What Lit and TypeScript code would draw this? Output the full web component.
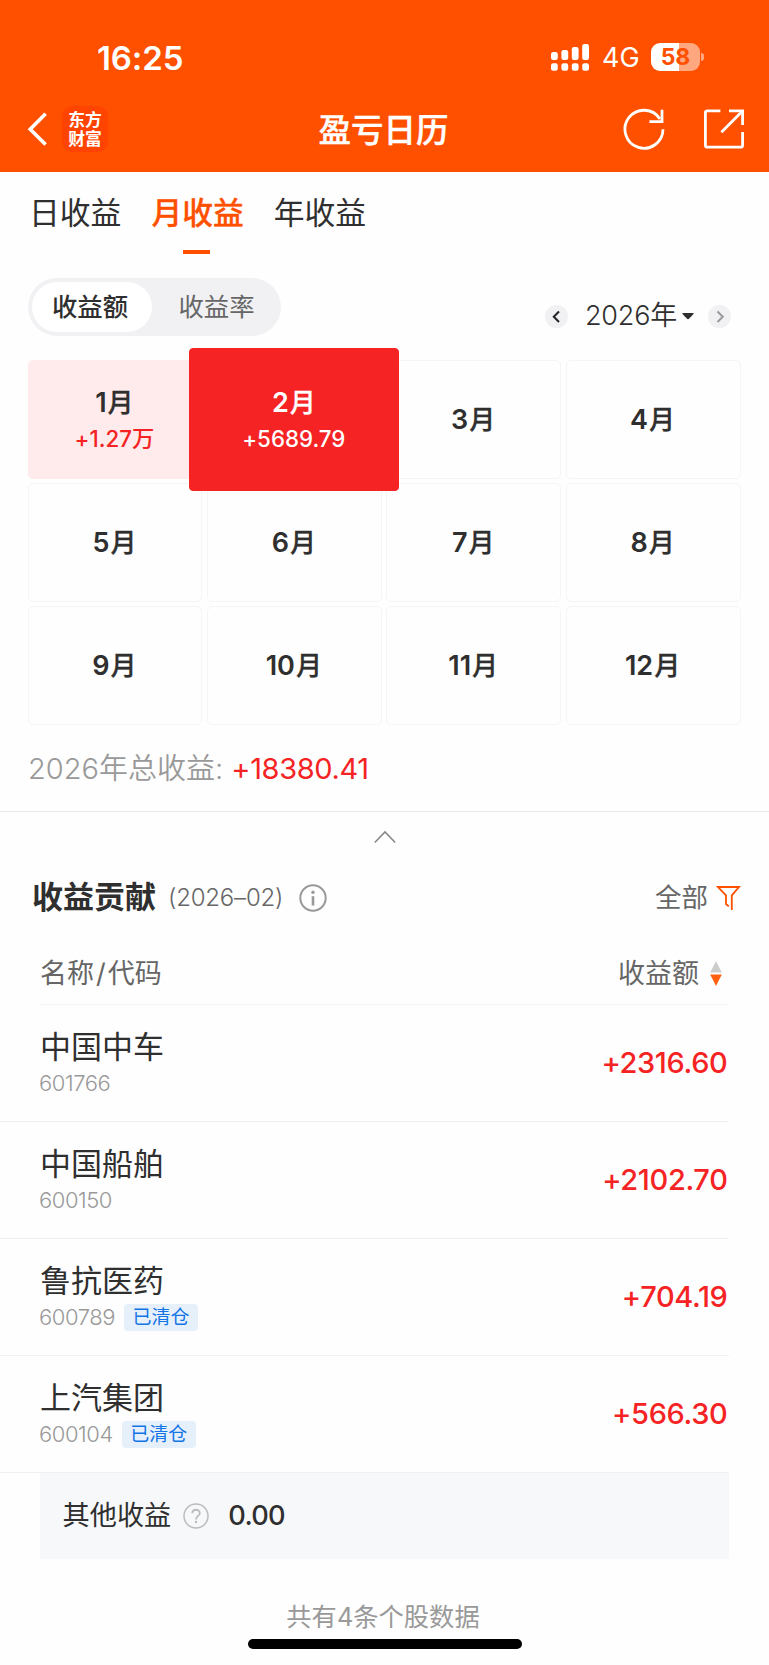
import { LitElement, html, svg, css, nothing } from "lit";
import { customElement, property, state } from "lit/decorators.js";
import { classMap } from "lit/directives/class-map.js";

interface Month {
  n: number;
  amount?: string;
}

interface Stock {
  name: string;
  code: string;
  amount: string;
  closed?: boolean;
}

const MONTHS: Month[] = Array.from({ length: 12 }, (_, i) => ({
  n: i + 1,
  amount: i === 0 ? "+1.27万" : i === 1 ? "+5689.79" : undefined,
}));

const STOCKS: Stock[] = [
  { name: "中国中车", code: "601766", amount: "+2316.60" },
  { name: "中国船舶", code: "600150", amount: "+2102.70" },
  { name: "鲁抗医药", code: "600789", amount: "+704.19", closed: true },
  { name: "上汽集团", code: "600104", amount: "+566.30", closed: true },
];

@customElement("app-header")
class AppHeader extends LitElement {
  static styles = css`
    :host { display: block; height: 172px; background: #ff5000; color: #fff; }
    svg { display: block; }
    .status { height: 86px; display: flex; align-items: flex-start; padding: 0 65px 0 97px; }
    .time { margin-top: 38px; line-height: 40px; font-size: 33px; font-weight: 600; letter-spacing: -0.1px; flex: 1; }
    .signal { margin-top: 43px; }
    .net { margin: 43px 0 0 12px; width: 49px; line-height: 30px; font-size: 27px; font-weight: 400; }
    .battery { margin-top: 43px; display: flex; align-items: center; gap: 1px; height: 28px; }
    .cell { width: 49px; height: 28px; border-radius: 9px; text-align: center; line-height: 28px;
      font-size: 23px; font-weight: 700; color: #ff5000;
      background: linear-gradient(90deg, #fff 58%, #ffa77f 58%); }
    .cap { width: 3px; height: 8px; border-radius: 0 4px 4px 0; background: #ffa77f; }
    .nav { height: 86px; display: grid; grid-template-columns: 1fr auto 1fr; align-items: center; }
    .left { display: flex; align-items: center; padding-left: 27px; gap: 15px; }
    .logo { width: 46px; height: 46px; border-radius: 10px; background: #ff4300;
      display: flex; flex-direction: column; justify-content: center;
      font: 700 16.8px/19.5px "Noto Sans CJK SC", sans-serif; text-align: center; }
    .title { font-size: 32.5px; line-height: 40px; font-weight: 500; -webkit-text-stroke: 0.4px #fff; padding: 3px 2px 0 0; }
    .right { display: flex; justify-content: flex-end; gap: 39px; padding-right: 25px; }
  `;

  render() {
    return html`
      <div class="status">
        <div class="time">16:25</div>
        <svg class="signal" width="39" height="28" viewBox="0 0 39 28" fill="#fff">
          ${[0, 1, 2, 3].map((i) => {
            const top = [9, 7, 4, 1][i];
            return svg`
              <rect x=${i * 10.4} y=${top} width="6.8" height=${17 - top} rx="2.2"></rect>
              <rect x=${i * 10.4} y="20.3" width="6.8" height="7.4" rx="2.2"></rect>`;
          })}
        </svg>
        <div class="net">4G</div>
        <div class="battery"><div class="cell">58</div><div class="cap"></div></div>
      </div>
      <div class="nav">
        <div class="left">
          <svg width="20" height="34" viewBox="0 0 20 34" fill="none" stroke="#fff" stroke-width="3.6">
            <path d="M18.6 1.8 3.2 17.2 18.6 32.6"></path>
          </svg>
          <div class="logo"><span>东方</span><span>财富</span></div>
        </div>
        <div class="title">盈亏日历</div>
        <div class="right">
          <svg width="42" height="42" viewBox="0 0 42 42" fill="none" stroke="#fff" stroke-width="2.8">
            <path d="M40 21.3A19 19 0 1 1 37 11"></path>
            <path d="M39 1.8V13.6H26.4"></path>
          </svg>
          <svg width="40" height="42" viewBox="0 0 40 42" fill="none" stroke="#fff" stroke-width="2.8">
            <path d="M16.4 2.8H3.4Q1.4 2.8 1.4 4.8V37.2Q1.4 39.2 3.4 39.2H36.6Q38.6 39.2 38.6 37.2V24"></path>
            <path d="M25 2.8H38.6V17"></path>
            <path d="M38 3.4 17.4 24.2"></path>
          </svg>
        </div>
      </div>
    `;
  }
}

@customElement("month-grid")
class MonthGrid extends LitElement {
  @property({ attribute: false }) months: Month[] = [];
  @state() selected = 2;

  static styles = css`
    :host { display: grid; grid-template-columns: repeat(4, 1fr); grid-auto-rows: 119px; gap: 4px 4.6px; }
    .cell { box-sizing: border-box; border: 1.5px solid #f5f5f6; border-radius: 5px; display: flex;
      flex-direction: column; align-items: center; justify-content: center; color: #2f2f2f; }
    .name { font-size: 27px; line-height: 36px; font-weight: 560; display: flex; gap: 1px; padding-right: 1px; }
    .name span + span { font-size: 26px; font-weight: 500; -webkit-text-stroke: 0.3px currentColor; }
    .amount { font-size: 22.3px; line-height: 36px; font-weight: 500; color: #f52323; padding-right: 1px; }
    .profit { background: #ffebeb; border-color: #ffebeb; padding-top: 2px; }
    .active { margin: -12px -17.5px; z-index: 1; background: #f52323; border-color: #f52323; color: #fff; border-radius: 4px; }
    .active .amount { color: #fff; }
  `;

  render() {
    return this.months.map((m) => html`
      <div class=${classMap({ cell: true, profit: !!m.amount, active: m.n === this.selected })}
        @click=${() => (this.selected = m.n)}>
        <div class="name"><span>${m.n}</span><span>月</span></div>
        ${m.amount ? html`<div class="amount">${m.amount}</div>` : nothing}
      </div>`);
  }
}

@customElement("stock-row")
class StockRow extends LitElement {
  @property({ attribute: false }) stock!: Stock;

  static styles = css`
    :host { display: flex; box-sizing: border-box; height: 117px; align-items: flex-start;
      justify-content: space-between; border-bottom: 1px solid #f0f1f2; padding: 22px 1.5px 0 39px; margin-right: 40px; }
    .name { font-size: 31px; line-height: 40px; color: #2f2f2f; padding-left: 1px; }
    .sub { display: flex; align-items: center; gap: 9px; height: 32px; }
    .code { font-size: 22px; font-weight: 340; color: #999; letter-spacing: -0.45px; }
    .tag { background: #e6f0fb; color: #1374e6; border-radius: 4px; width: 74px; height: 27px;
      line-height: 27px; text-align: center; font-size: 19px; }
    .amount { font-size: 29px; line-height: 40px; font-weight: 500; color: #f52323; margin-top: 16px; letter-spacing: -0.35px; }
  `;

  render() {
    const s = this.stock;
    return html`
      <div>
        <div class="name">${s.name}</div>
        <div class="sub">
          <span class="code">${s.code}</span>
          ${s.closed ? html`<span class="tag">已清仓</span>` : nothing}
        </div>
      </div>
      <div class="amount">${s.amount}</div>
    `;
  }
}

@customElement("app-root")
class AppRoot extends LitElement {
  @state() tab = 1;

  static styles = css`
    :host { display: block; width: 769px; height: 1665px; overflow: hidden; background: #fefefe; color: #2f2f2f; line-height: 1.3;
      font-family: Inter, "Noto Sans CJK SC", sans-serif; font-feature-settings: "calt" 0; white-space: nowrap; }
    svg { display: block; }
    .tabs { display: flex; gap: 30px; height: 106px; padding: 21px 29px 0; box-sizing: border-box; }
    .tab { font-size: 30.8px; line-height: 40px; display: flex; flex-direction: column; align-items: center; height: 61px; justify-content: space-between; }
    .tab.on { color: #ff5000; font-weight: 500; -webkit-text-stroke: 0.3px #ff5000; }
    .tab.on::after { content: ""; width: 27px; height: 4px; background: #ff5000; margin-right: 2px; }
    .tools { display: flex; justify-content: space-between; height: 82px; padding: 0 38px 0 28px; }
    .segment { display: flex; box-sizing: border-box; width: 253px; height: 58px; border-radius: 29px; background: #f1f1f4; padding: 4px; }
    .opt { flex: 1; font-size: 25.4px; line-height: 50px; text-align: center; border-radius: 25px; color: #666; padding-left: 4px; }
    .opt.on { flex: 0 0 116px; background: #fff; color: #2f2f2f; font-weight: 500; padding: 0 4px 0 0; }
    .year { display: flex; align-items: center; height: 40px; margin-top: 18px; }
    .round { width: 23px; height: 23px; border-radius: 50%; background: #f1f1f4; }
    .label { font-size: 27px; font-weight: 340; margin: 0 5px 0 17px; letter-spacing: -0.2px; }
    .caret { margin-right: 14px; }
    month-grid { margin: 0 28.5px 0 27.5px; }
    .total { font-size: 29px; line-height: 40px; font-weight: 340; color: #999; padding: 24px 28px 22px; height: 40px; }
    .total b { font-weight: 400; color: #f52323; letter-spacing: -0.35px; }
    .fold { border-top: 1.5px solid #e8e9ea; height: 46px; padding-top: 18px; box-sizing: border-box; display: flex; justify-content: center; }
    .heading { display: flex; align-items: center; height: 81px; padding: 0 28px 0 32px; }
    .heading h2 { margin: 0; font-size: 31px; font-weight: 700; }
    .period { font-size: 24px; font-weight: 330; color: #666; margin: 0 16px 0 12px; letter-spacing: -0.2px; }
    .filter { margin-left: auto; display: flex; align-items: center; gap: 8px; font-size: 26.5px; color: #666; }
    .cols { display: flex; justify-content: space-between; align-items: center; height: 67px; box-sizing: border-box;
      margin: 0 40px 0 39px; border-bottom: 1px solid #f3f3f4; padding: 5px 7px 0 1px; font-size: 27px; color: #666; font-weight: 400; }
    .slash { margin: 0 2px; }
    .sort { display: flex; align-items: center; gap: 11px; }
    .other { margin: 0 40px 0 39.5px; height: 86px; background: #f7f8fa; display: flex; align-items: center; padding-left: 23px; font-size: 27.2px; box-sizing: border-box; }
    .other svg { margin: 0 19px 0 12px; }
    .other b { font-weight: 500; letter-spacing: -0.7px; }
    .count { text-align: center; font-size: 25.3px; line-height: 40px; padding: 38px 3px 2px 0; color: #999; }
    .home { width: 274px; height: 10px; border-radius: 5px; background: #000; margin: 0 auto; }
  `;

  render() {
    return html`
      <app-header></app-header>
      <div class="tabs">
        ${["日收益", "月收益", "年收益"].map((t, i) => html`
          <div class=${classMap({ tab: true, on: i === this.tab })} @click=${() => (this.tab = i)}>${t}</div>`)}
      </div>
      <div class="tools">
        <div class="segment"><div class="opt on">收益额</div><div class="opt">收益率</div></div>
        <div class="year">
          <svg class="round" viewBox="0 0 23 23" fill="none" stroke="#222" stroke-width="2"><path d="M14 6.5 8.8 11.8 14 17"></path></svg>
          <span class="label">2026年</span>
          <svg class="caret" width="12" height="7" viewBox="0 0 12 7" fill="#2f2f2f"><path d="M.8 0H11.2Q12 .4 11.5 1L7 5.8Q6 6.6 5 5.8L.5 1Q0 .4 .8 0Z"></path></svg>
          <svg class="round" viewBox="0 0 23 23" fill="none" stroke="#999" stroke-width="2"><path d="M9.5 6.5 14.8 11.8 9.5 17"></path></svg>
        </div>
      </div>
      <month-grid .months=${MONTHS}></month-grid>
      <div class="total">2026年总收益: <b>+18380.41</b></div>
      <div class="fold">
        <svg width="22" height="14" viewBox="0 0 22 14" fill="none" stroke="#888" stroke-width="1.6"><path d="M.8 12.5 11 2 21.2 12.5"></path></svg>
      </div>
      <div class="heading">
        <h2>收益贡献</h2>
        <span class="period">(2026–02)</span>
        <svg width="28" height="28" viewBox="0 0 28 28" fill="none" stroke="#999" stroke-width="2">
          <circle cx="14" cy="14" r="12.7"></circle><path d="M14 12.2V21.5" stroke-width="2.6"></path>
          <circle cx="14" cy="8.3" r="1.7" fill="#999" stroke="none"></circle>
        </svg>
        <div class="filter">全部
          <svg width="25" height="25" viewBox="0 0 25 25" fill="none" stroke="#ff5000" stroke-width="1.8">
            <path d="M12.8 21.4 10 19V10.3L2 2H23L15.8 10.3V25"></path>
          </svg>
        </div>
      </div>
      <div class="cols">
        <span>名称<span class="slash">/</span>代码</span>
        <span class="sort">收益额
          <svg width="12" height="25" viewBox="0 0 12 25"><path d="M6 0 11.8 11.5H.2Z" fill="#ccc"></path><path d="M.2 13.5H11.8L6 25Z" fill="#ff6010"></path></svg>
        </span>
      </div>
      ${STOCKS.map((s) => html`<stock-row .stock=${s}></stock-row>`)}
      <div class="other">
        其他收益
        <svg width="26" height="26" viewBox="0 0 26 26" fill="none" stroke="#bbb" stroke-width="1.5">
          <circle cx="13" cy="13" r="12"></circle>
          <path d="M9.3 10.3C9.3 5.6 16.8 5.6 16.8 10.2C16.8 13 13 12.8 13 16.4" stroke-width="1.8"></path>
          <circle cx="13" cy="19" r="1.2" fill="#bbb" stroke="none"></circle>
        </svg>
        <b>0.00</b>
      </div>
      <div class="count">共有4条个股数据</div>
      <div class="home"></div>
    `;
  }
}
